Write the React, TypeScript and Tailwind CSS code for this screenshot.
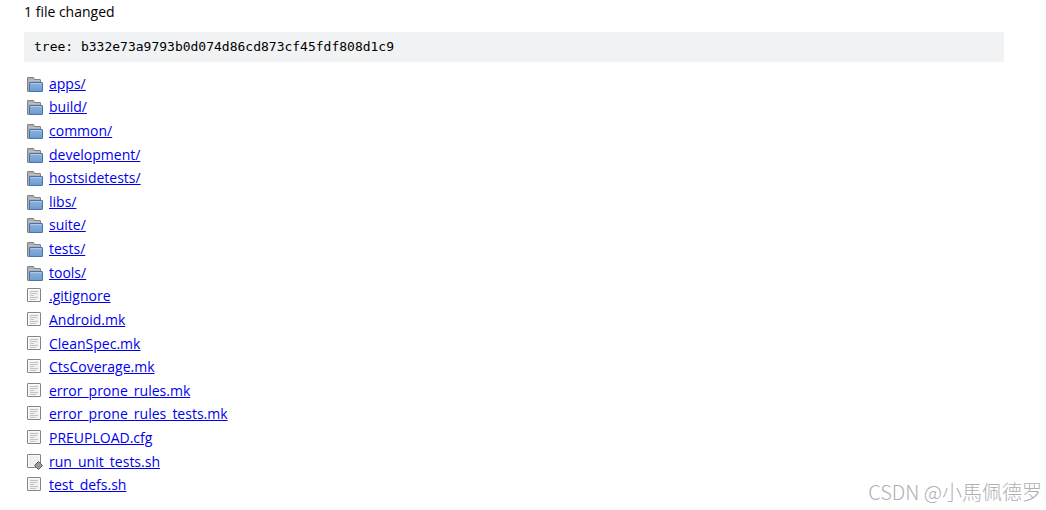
interface Entry {
  name: string;
  kind: 'tree' | 'file' | 'exec';
}

const entries: Entry[] = [
  { name: 'apps/', kind: 'tree' },
  { name: 'build/', kind: 'tree' },
  { name: 'common/', kind: 'tree' },
  { name: 'development/', kind: 'tree' },
  { name: 'hostsidetests/', kind: 'tree' },
  { name: 'libs/', kind: 'tree' },
  { name: 'suite/', kind: 'tree' },
  { name: 'tests/', kind: 'tree' },
  { name: 'tools/', kind: 'tree' },
  { name: '.gitignore', kind: 'file' },
  { name: 'Android.mk', kind: 'file' },
  { name: 'CleanSpec.mk', kind: 'file' },
  { name: 'CtsCoverage.mk', kind: 'file' },
  { name: 'error_prone_rules.mk', kind: 'file' },
  { name: 'error_prone_rules_tests.mk', kind: 'file' },
  { name: 'PREUPLOAD.cfg', kind: 'file' },
  { name: 'run_unit_tests.sh', kind: 'exec' },
  { name: 'test_defs.sh', kind: 'file' },
];

function FolderIcon() {
  return (
    <svg width="16" height="16" viewBox="0 -1 16 16" className="shrink-0" aria-hidden="true">
      <defs>
        <linearGradient id="folder" x1="0" y1="0" x2="0" y2="1">
          <stop offset="0" stopColor="#8fb3dc" />
          <stop offset="1" stopColor="#6d9bce" />
        </linearGradient>
      </defs>
      {/* Back of the folder with its tab */}
      <path d="M.5 14V1Q.5 .5 1 .5H6.5L7.5 2.5H13Q13.5 2.5 13.5 3V6H2.5V14.5H1Q.5 14.5.5 14Z" fill="#b0b0b0" stroke="#808080" />
      <path d="M1.5 3.5H13" stroke="#c0c0c0" />
      {/* Front */}
      <rect x="2.5" y="5.5" width="13" height="9" rx=".5" fill="url(#folder)" stroke="#4674ab" />
      <path d="M3.5 6.5H14.5" stroke="#adc8e8" />
    </svg>
  );
}

function FileIcon({ exec = false }: { exec?: boolean }) {
  return (
    <svg width="16" height="16" viewBox="0 0 16 16" className="shrink-0" aria-hidden="true">
      <rect x=".5" y=".5" width="13" height="13" rx=".5" fill="#f0f0f0" stroke="#848484" />
      <rect x="1.5" y="1.5" width="11" height="11" fill="none" stroke="#fafafa" />
      {exec ? (
        <path d="M11.5 7.5L15.5 11.5L11.5 15.5L7.5 11.5Z" fill="#9b9b9b" stroke="#5c5c5c" />
      ) : (
        <path d="M3 3.5H11M3 5.5H10M3 7.5H7M3 9.5H11M3 11.5H9" stroke="#c4c4c4" />
      )}
    </svg>
  );
}

export default function App() {
  return (
    <div className="relative bg-white pt-0.5 pb-3 pl-6 font-['Open_Sans','Noto_Sans',sans-serif] text-sm text-black">
      <main className="max-w-[980px]">
        <p className="leading-5">1 file changed</p>

        <div className="mt-2.5 bg-[#f1f2f4] px-2.5 py-[5px] font-['DejaVu_Sans_Mono',monospace] text-[13px] leading-5">
          tree: b332e73a9793b0d074d86cd873cf45fdf808d1c9
        </div>

        <ul className="mt-2.5 grid h-[425px] auto-rows-fr">
          {entries.map((entry) => (
            <li key={entry.name} className="flex items-center gap-1.5 pl-[3px]">
              {entry.kind === 'tree' ? <FolderIcon /> : <FileIcon exec={entry.kind === 'exec'} />}
              <a href="#" className="leading-5 text-[#0000ee] underline">
                {entry.name}
              </a>
            </li>
          ))}
        </ul>
      </main>

      <span className="absolute right-1 bottom-[5px] font-['Noto_Sans_CJK_SC',sans-serif] text-[20px] leading-6 font-light text-[#b0b0b0]">
        CSDN @小馬佩德罗
      </span>
    </div>
  );
}
